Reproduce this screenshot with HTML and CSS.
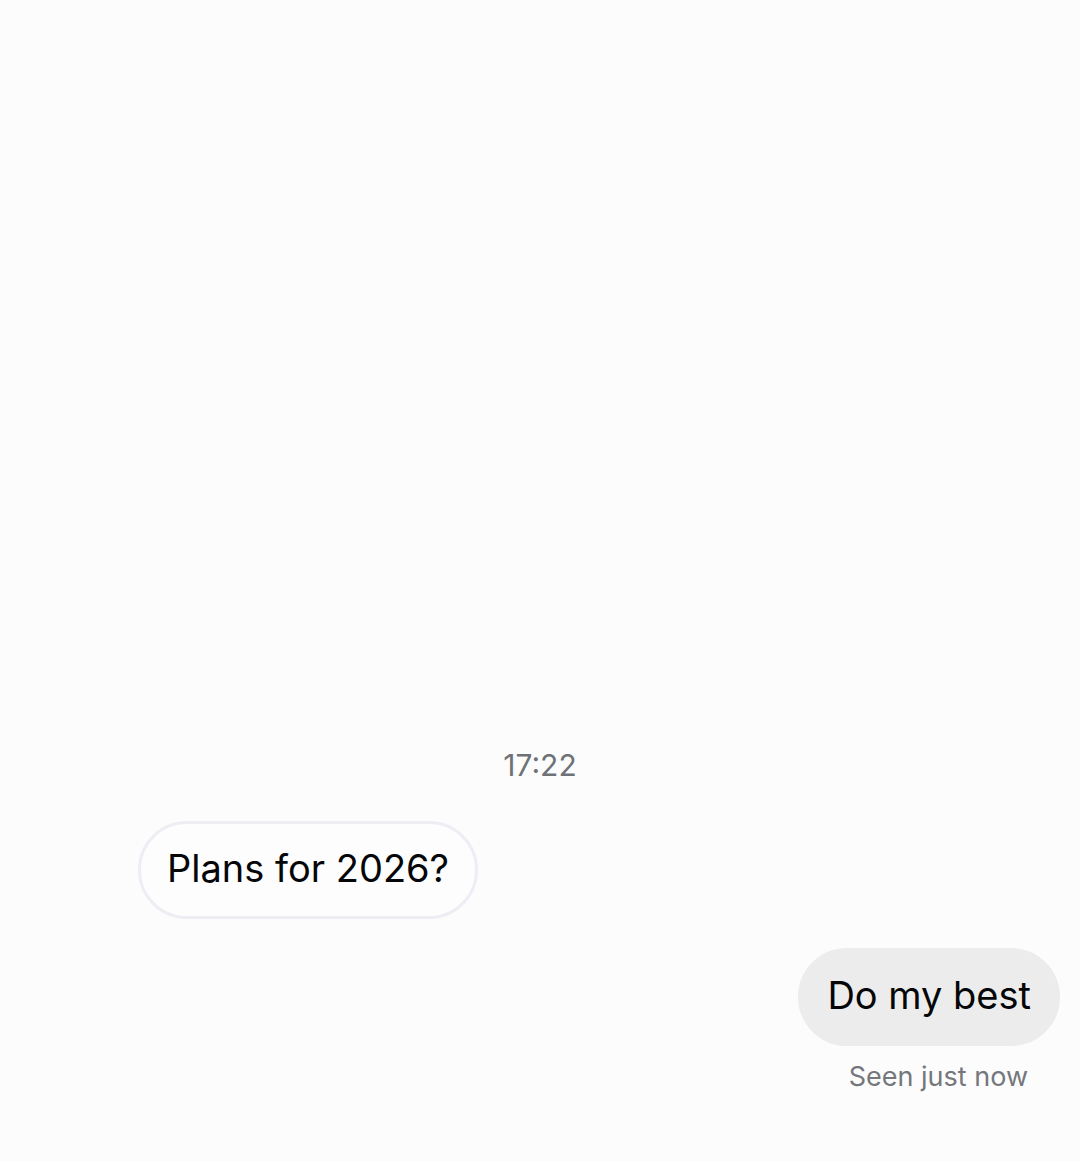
FILE: index.html
```html
<!DOCTYPE html>
<html lang="en">
<head>
    <meta charset="UTF-8">
    <meta name="viewport" content="width=device-width, initial-scale=1.0">
    <title>Chat</title>
    <link rel="stylesheet" href="styles.css">
</head>
<body>
    <main class="chat">
        <time class="timestamp" datetime="17:22">17:22</time>
        <p class="message received">Plans for 2026?</p>
        <p class="message sent">Do my best</p>
        <p class="status">Seen just now</p>
    </main>
</body>
</html>
```
FILE: styles.css
```css
* {
    box-sizing: border-box;
}
body {
    margin: 0;
    background: #fcfcfd;
    font-family: Inter, sans-serif;
    color: #050607;
}
.chat {
    min-height: 100vh;
    padding: 20px 20px 66px;
    display: flex;
    flex-direction: column;
    justify-content: flex-end;
}
.timestamp {
    align-self: center;
    margin-bottom: 36px;
    font-size: 30px;
    line-height: 40px;
    color: #6e7276;
}
.message {
    margin: 0;
    padding: 17px 26px 21px;
    border: 3px solid transparent;
    border-radius: 49px;
    font-size: 38px;
    line-height: 54px;
}
.received {
    align-self: flex-start;
    margin-left: 118px;
    border-color: #edeef3;
    background: #fdfdfe;
}
.sent {
    align-self: flex-end;
    margin-top: 29px;
    border-color: #ececec;
    background: #ececec;
}
.status {
    align-self: flex-end;
    margin: 13px 32px 0 0;
    font-size: 27px;
    line-height: 36px;
    color: #74777b;
}
```
